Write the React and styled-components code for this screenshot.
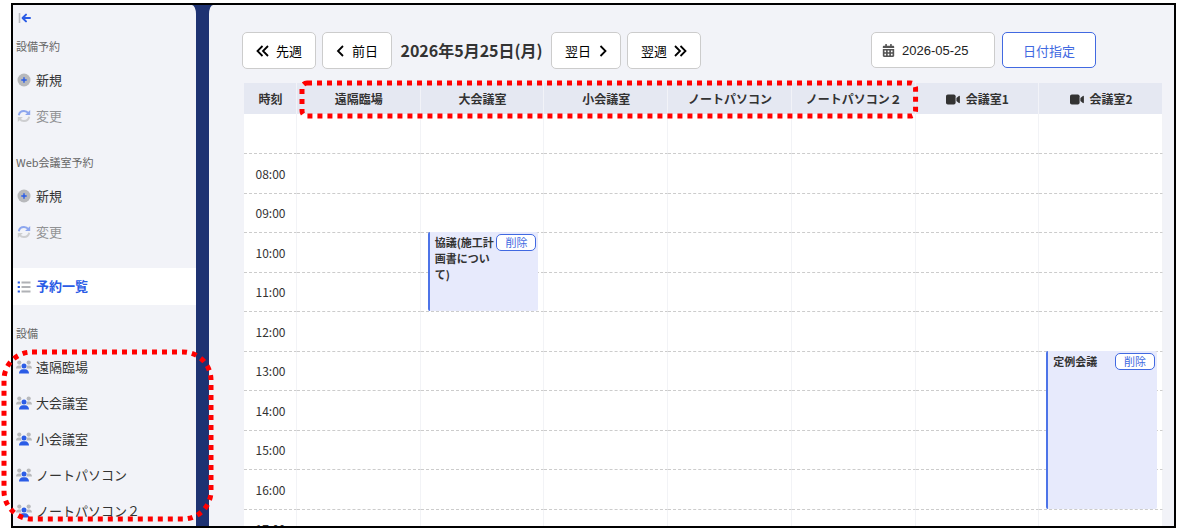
import React, { useState } from "react";
import styled, { createGlobalStyle } from "styled-components";
import { FaCalendarAlt } from "react-icons/fa";

//---------------------------------------------------------
// data
//---------------------------------------------------------
const FACILITIES = [
  "遠隔臨場",
  "大会議室",
  "小会議室",
  "ノートパソコン",
  "ノートパソコン２",
];

const COLUMNS = [
  ...FACILITIES.map((name) => ({ name })),
  { name: "会議室1", web: true },
  { name: "会議室2", web: true },
];

const TIMES = [
  "",
  "08:00",
  "09:00",
  "10:00",
  "11:00",
  "12:00",
  "13:00",
  "14:00",
  "15:00",
  "16:00",
  "17:00",
];

const EVENTS = [
  { column: "大会議室", start: "10:00", hours: 2, title: "協議(施工計画書について)" },
  { column: "会議室2", start: "13:00", hours: 4, title: "定例会議" },
];

// two rows of the timetable (39px + 40px)
const TWO_HOURS = 79;

//---------------------------------------------------------
// styles
//---------------------------------------------------------
const GlobalStyle = createGlobalStyle`
  * {
    box-sizing: border-box;
  }

  body {
    margin: 0;
    background: #fff;
    color: #333;
    font-family: "Noto Sans CJK JP", "Noto Sans", sans-serif;
    font-size: 13px;
    overflow: hidden;
  }

  button,
  input {
    font-family: inherit;
    font-size: 13px;
    margin: 0;
  }
`;

const Page = styled.div`
  position: relative;
  height: 100vh;
  padding: 3px 9px 4px 11px;
`;

const Frame = styled.div`
  display: flex;
  height: 100%;
  border: 2px solid #000;
  background: #1e3272;
  overflow: hidden;
`;

const Sidebar = styled.nav`
  flex: 0 0 183px;
  margin-right: 13px;
  background: #f2f3f8;
  border-top-right-radius: 4px 9px;
`;

const CollapseButton = styled.button`
  display: flex;
  align-items: center;
  height: 26px;
  padding: 0 5px;
  border: 0;
  background: none;
`;

const MenuGroup = styled.section`
  margin-bottom: 13px;
`;

const MenuTitle = styled.h2`
  height: 31px;
  margin: 0;
  padding-left: 3px;
  font-size: 11px;
  font-weight: 400;
  line-height: 31px;
  color: #666;
`;

const MenuList = styled.ul`
  margin: 0;
  padding: 0;
  list-style: none;
`;

const MenuLink = styled.a`
  display: flex;
  align-items: center;
  gap: 4px;
  height: ${(props) => (props.$active ? "37px" : "36px")};
  padding: 0 0 2px 3px;
  color: ${(props) => (props.$active ? "#2b5ce6" : "#333")};
  background: ${(props) => (props.$active ? "#fff" : "none")};
  font-weight: ${(props) => (props.$active ? 700 : 400)};
  opacity: ${(props) => (props.$disabled ? 0.5 : 1)};
  text-decoration: none;

  svg {
    margin-top: 2px;
  }
`;

const ActiveItem = styled.div`
  margin: 18px 0 13px;
`;

const Main = styled.main`
  flex: 1;
  min-width: 0;
  padding: 27px 11px 0 33px;
  background: #f2f3f8;
  border-top-left-radius: 4px 9px;
`;

const Toolbar = styled.div`
  display: flex;
  justify-content: space-between;
  align-items: flex-start;
  margin: 0 67px 14px 0;
`;

const ToolGroup = styled.div`
  display: flex;
  align-items: center;
  gap: ${(props) => props.$gap};
`;

const NavButton = styled.button`
  display: flex;
  align-items: center;
  gap: 6px;
  height: 37px;
  padding: 0 13px;
  border: 1px solid #ccc;
  border-radius: 5px;
  background: #fff;
  color: #000;
  white-space: nowrap;
`;

const CurrentDate = styled.h1`
  min-width: 147px;
  margin: 0;
  font-size: 16px;
  font-weight: 700;
  line-height: 37px;
  text-align: center;
  white-space: nowrap;
`;

const DateField = styled.label`
  display: flex;
  align-items: center;
  gap: 7px;
  width: 124px;
  height: 36px;
  padding: 0 10px;
  border: 1px solid #ccc;
  border-radius: 5px;
  background: #fff;
  color: #555;
`;

const DateInput = styled.input`
  width: 80px;
  padding: 0;
  border: 0;
  outline: 0;
  background: none;
  color: #222;
  font-family: "Liberation Sans", sans-serif;
`;

const PickButton = styled.button`
  width: 94px;
  height: 36px;
  padding: 0;
  border: 1px solid #4169e1;
  border-radius: 5px;
  background: #fff;
  color: #4169e1;
`;

const TableArea = styled.div`
  position: relative;
  margin-left: 2px;
`;

const Timetable = styled.table`
  width: 100%;
  table-layout: fixed;
  border-spacing: 0;
  background: #fff;
`;

const HeadCell = styled.th`
  width: ${(props) => props.$width || "auto"};
  height: 31px;
  padding: 0 0 0 1px;
  border-right: 1px solid #f2f3f8;
  background: #e5e8f2;
  font-size: 12px;
  line-height: 20px;
  white-space: nowrap;

  svg {
    margin-right: 6px;
    vertical-align: -1px;
  }
`;

const Row = styled.tr`
  height: 39px;

  &:first-child,
  &:nth-child(even) {
    height: 40px;
  }
`;

const TimeCell = styled.th`
  padding: 0 0 0 1px;
  border-right: 1px solid #f2f3f6;
  border-bottom: 1px dashed #ccc;
  font-size: 12px;
  font-weight: 400;
  line-height: 18px;
`;

const Slot = styled.td`
  position: relative;
  padding: 0;
  border-right: 1px solid #f2f3f6;
  border-bottom: 1px dashed #ccc;
`;

const Event = styled.div`
  position: absolute;
  z-index: 1;
  top: -1px;
  left: 7px;
  right: 5px;
  display: flex;
  align-items: flex-start;
  justify-content: space-between;
  padding: 2px 2px 0 5px;
  border-left: 2px solid #4d74e8;
  border-radius: 2px;
  background: #e7eafc;
`;

const EventTitle = styled.strong`
  font-size: 11px;
  line-height: 16px;
`;

const DeleteButton = styled.button`
  flex: 0 0 40px;
  height: 17px;
  padding: 0;
  border: 1px solid #4169e1;
  border-radius: 5px;
  background: #fff;
  color: #4169e1;
  font-size: 11px;
  line-height: 15px;
`;

const Marker = styled.svg`
  position: absolute;
  overflow: visible;
  pointer-events: none;
  fill: none;
  stroke: #f00;
  stroke-width: 5;
`;

// around the facility columns of the header
const HeadMarker = styled(Marker)`
  top: 0;
  left: 58px;
  width: calc((100% - 53px) * 5 / 7 - 5px);
  height: 33px;
`;

// around the facility links of the menu
const MenuMarker = styled(Marker)`
  top: 352px;
  left: 4px;
  width: 207px;
  height: 167px;
`;

//---------------------------------------------------------
// icons
//---------------------------------------------------------
const CollapseIcon = () => (
  <svg width="13" height="12" viewBox="0 0 13 12" fill="none">
    <path d="M1.5 1v10" stroke="#b9bbc2" strokeWidth="1.6" />
    <path
      d="M12 6H5M8 2.6 4.6 6 8 9.4"
      stroke="#2b5ce6"
      strokeWidth="2"
      strokeLinecap="round"
      strokeLinejoin="round"
    />
  </svg>
);

const PlusIcon = () => (
  <svg width="16" height="14" viewBox="0 0 16 14" fill="none">
    <circle cx="8" cy="7" r="6.5" fill="#b8b9bc" />
    <path d="M8 4.3v5.4M5.3 7h5.4" stroke="#2b5ce6" strokeWidth="1.4" />
  </svg>
);

const RotateIcon = () => (
  <svg width="16" height="14" viewBox="0 0 16 14" fill="none">
    <path d="M2.8 6.2C3.3 3.6 5.4 2 8 2c1.9 0 3.3.8 4.4 2.2" stroke="#2b5ce6" strokeWidth="1.9" />
    <path d="M14.2 1v5.100H9.100z" fill="#2b5ce6" />
    <path d="M13.2 7.8C12.7 10.4 10.6 12 8 12c-1.9 0-3.3-.8-4.4-2.2" stroke="#aaa" strokeWidth="1.9" />
    <path d="M1.800 13V7.900h5.100z" fill="#aaa" />
  </svg>
);

const ListIcon = () => (
  <svg width="16" height="14" viewBox="0 0 16 14" fill="none">
    <path d="M5.5 2.5h9M5.5 7h9M5.5 11.5h9" stroke="#b0b2b6" strokeWidth="1.8" />
    <path d="M1.7 1.400h2.200v2.200H1.700zM1.700 5.900h2.200v2.200H1.700zM1.700 10.400h2.200v2.200H1.700z" fill="#2b5ce6" />
  </svg>
);

const UsersIcon = () => (
  <svg width="16" height="14" viewBox="0 0 16 14">
    <g fill="#b8b9bc">
      <circle cx="3.3" cy="2.6" r="2.1" />
      <circle cx="12.7" cy="2.6" r="2.1" />
      <path d="M0 8.600C0 6.600 1.200 5.500 2.700 5.500h1.200c.4 0 .8.100 1.100.2-.2 1.100.1 2.200.8 2.900H0z" />
      <path d="M16 8.600c0-2-1.200-3.100-2.700-3.100h-1.200c-.4 0-.8.100-1.100.2.2 1.100-.1 2.200-.8 2.900H16z" />
    </g>
    <g fill="#2b5ce6">
      <circle cx="8" cy="6" r="2.500" />
      <path d="M3 13.600c0-2.600 1.700-4.300 3.900-4.300h2.200c2.200 0 3.900 1.700 3.900 4.300z" />
    </g>
  </svg>
);

const VideoIcon = () => (
  <svg width="14" height="11" viewBox="0 0 14 11" fill="currentColor">
    <rect width="9.6" height="10" y=".5" rx="1.8" />
    <path d="M10.400 3.900 12.900 1.900c.4-.3 1-.1 1 .5v6.200c0 .6-.6.800-1 .5l-2.500-2z" />
  </svg>
);

const ARROWS = {
  prev: { width: 10, d: "M7 1 2 6l5 5" },
  next: { width: 10, d: "M3.500 1 8.500 6l-5 5" },
  prevWeek: { width: 14, d: "M6.500 1 1.500 6l5 5M12 1 7 6l5 5" },
  nextWeek: { width: 14, d: "M2 1l5 5-5 5M7.500 1l5 5-5 5" },
};

const Arrow = ({ type }) => (
  <svg
    width={ARROWS[type].width}
    height="12"
    fill="none"
    stroke="currentColor"
    strokeWidth="1.8"
  >
    <path d={ARROWS[type].d} />
  </svg>
);

//---------------------------------------------------------
// parts
//---------------------------------------------------------
function ReserveMenu({ title }) {
  return (
    <MenuGroup>
      <MenuTitle>{title}</MenuTitle>
      <MenuList>
        <li>
          <MenuLink href="#new">
            <PlusIcon />
            新規
          </MenuLink>
        </li>
        <li>
          <MenuLink href="#edit" $disabled>
            <RotateIcon />
            変更
          </MenuLink>
        </li>
      </MenuList>
    </MenuGroup>
  );
}

function Reservation({ event }) {
  return (
    <Event style={{ height: (event.hours / 2) * TWO_HOURS }}>
      <EventTitle>{event.title}</EventTitle>
      <DeleteButton type="button">削除</DeleteButton>
    </Event>
  );
}

function Schedule() {
  return (
    <TableArea>
      <Timetable>
        <thead>
          <tr>
            <HeadCell $width="53px">時刻</HeadCell>
            {COLUMNS.map((column) => (
              <HeadCell key={column.name}>
                {column.web && <VideoIcon />}
                {column.name}
              </HeadCell>
            ))}
          </tr>
        </thead>
        <tbody>
          {TIMES.map((time) => (
            <Row key={time}>
              <TimeCell scope="row">{time}</TimeCell>
              {COLUMNS.map((column) => {
                const event = EVENTS.find(
                  (e) => e.column === column.name && e.start === time
                );
                return (
                  <Slot key={column.name}>
                    {event && <Reservation event={event} />}
                  </Slot>
                );
              })}
            </Row>
          ))}
        </tbody>
      </Timetable>
      <HeadMarker>
        <rect width="100%" height="100%" rx="5" strokeDasharray="5 5" />
      </HeadMarker>
    </TableArea>
  );
}

//---------------------------------------------------------
function App() {
  const [date, setDate] = useState("2026-05-25");

  return (
    <>
      <GlobalStyle />
      <Page>
        <Frame>
          <Sidebar>
            <CollapseButton type="button" aria-label="メニューを閉じる">
              <CollapseIcon />
            </CollapseButton>
            <ReserveMenu title="設備予約" />
            <ReserveMenu title="Web会議室予約" />
            <ActiveItem>
              <MenuLink href="#list" $active>
                <ListIcon />
                予約一覧
              </MenuLink>
            </ActiveItem>
            <MenuTitle>設備</MenuTitle>
            <MenuList>
              {FACILITIES.map((name) => (
                <li key={name}>
                  <MenuLink href="#facility">
                    <UsersIcon />
                    {name}
                  </MenuLink>
                </li>
              ))}
            </MenuList>
          </Sidebar>

          <Main>
            <Toolbar>
              <ToolGroup $gap="6px">
                <NavButton type="button">
                  <Arrow type="prevWeek" />
                  先週
                </NavButton>
                <NavButton type="button">
                  <Arrow type="prev" />
                  前日
                </NavButton>
                <CurrentDate>2026年5月25日(月)</CurrentDate>
                <NavButton type="button">
                  翌日
                  <Arrow type="next" />
                </NavButton>
                <NavButton type="button">
                  翌週
                  <Arrow type="nextWeek" />
                </NavButton>
              </ToolGroup>
              <ToolGroup $gap="7px">
                <DateField>
                  <FaCalendarAlt size={13} />
                  <DateInput
                    aria-label="日付"
                    value={date}
                    onChange={(e) => setDate(e.target.value)}
                  />
                </DateField>
                <PickButton type="button">日付指定</PickButton>
              </ToolGroup>
            </Toolbar>
            <Schedule />
          </Main>
        </Frame>
        <MenuMarker>
          <rect width="100%" height="100%" rx="28" strokeDasharray="5 5" />
        </MenuMarker>
      </Page>
    </>
  );
}

export default App;
